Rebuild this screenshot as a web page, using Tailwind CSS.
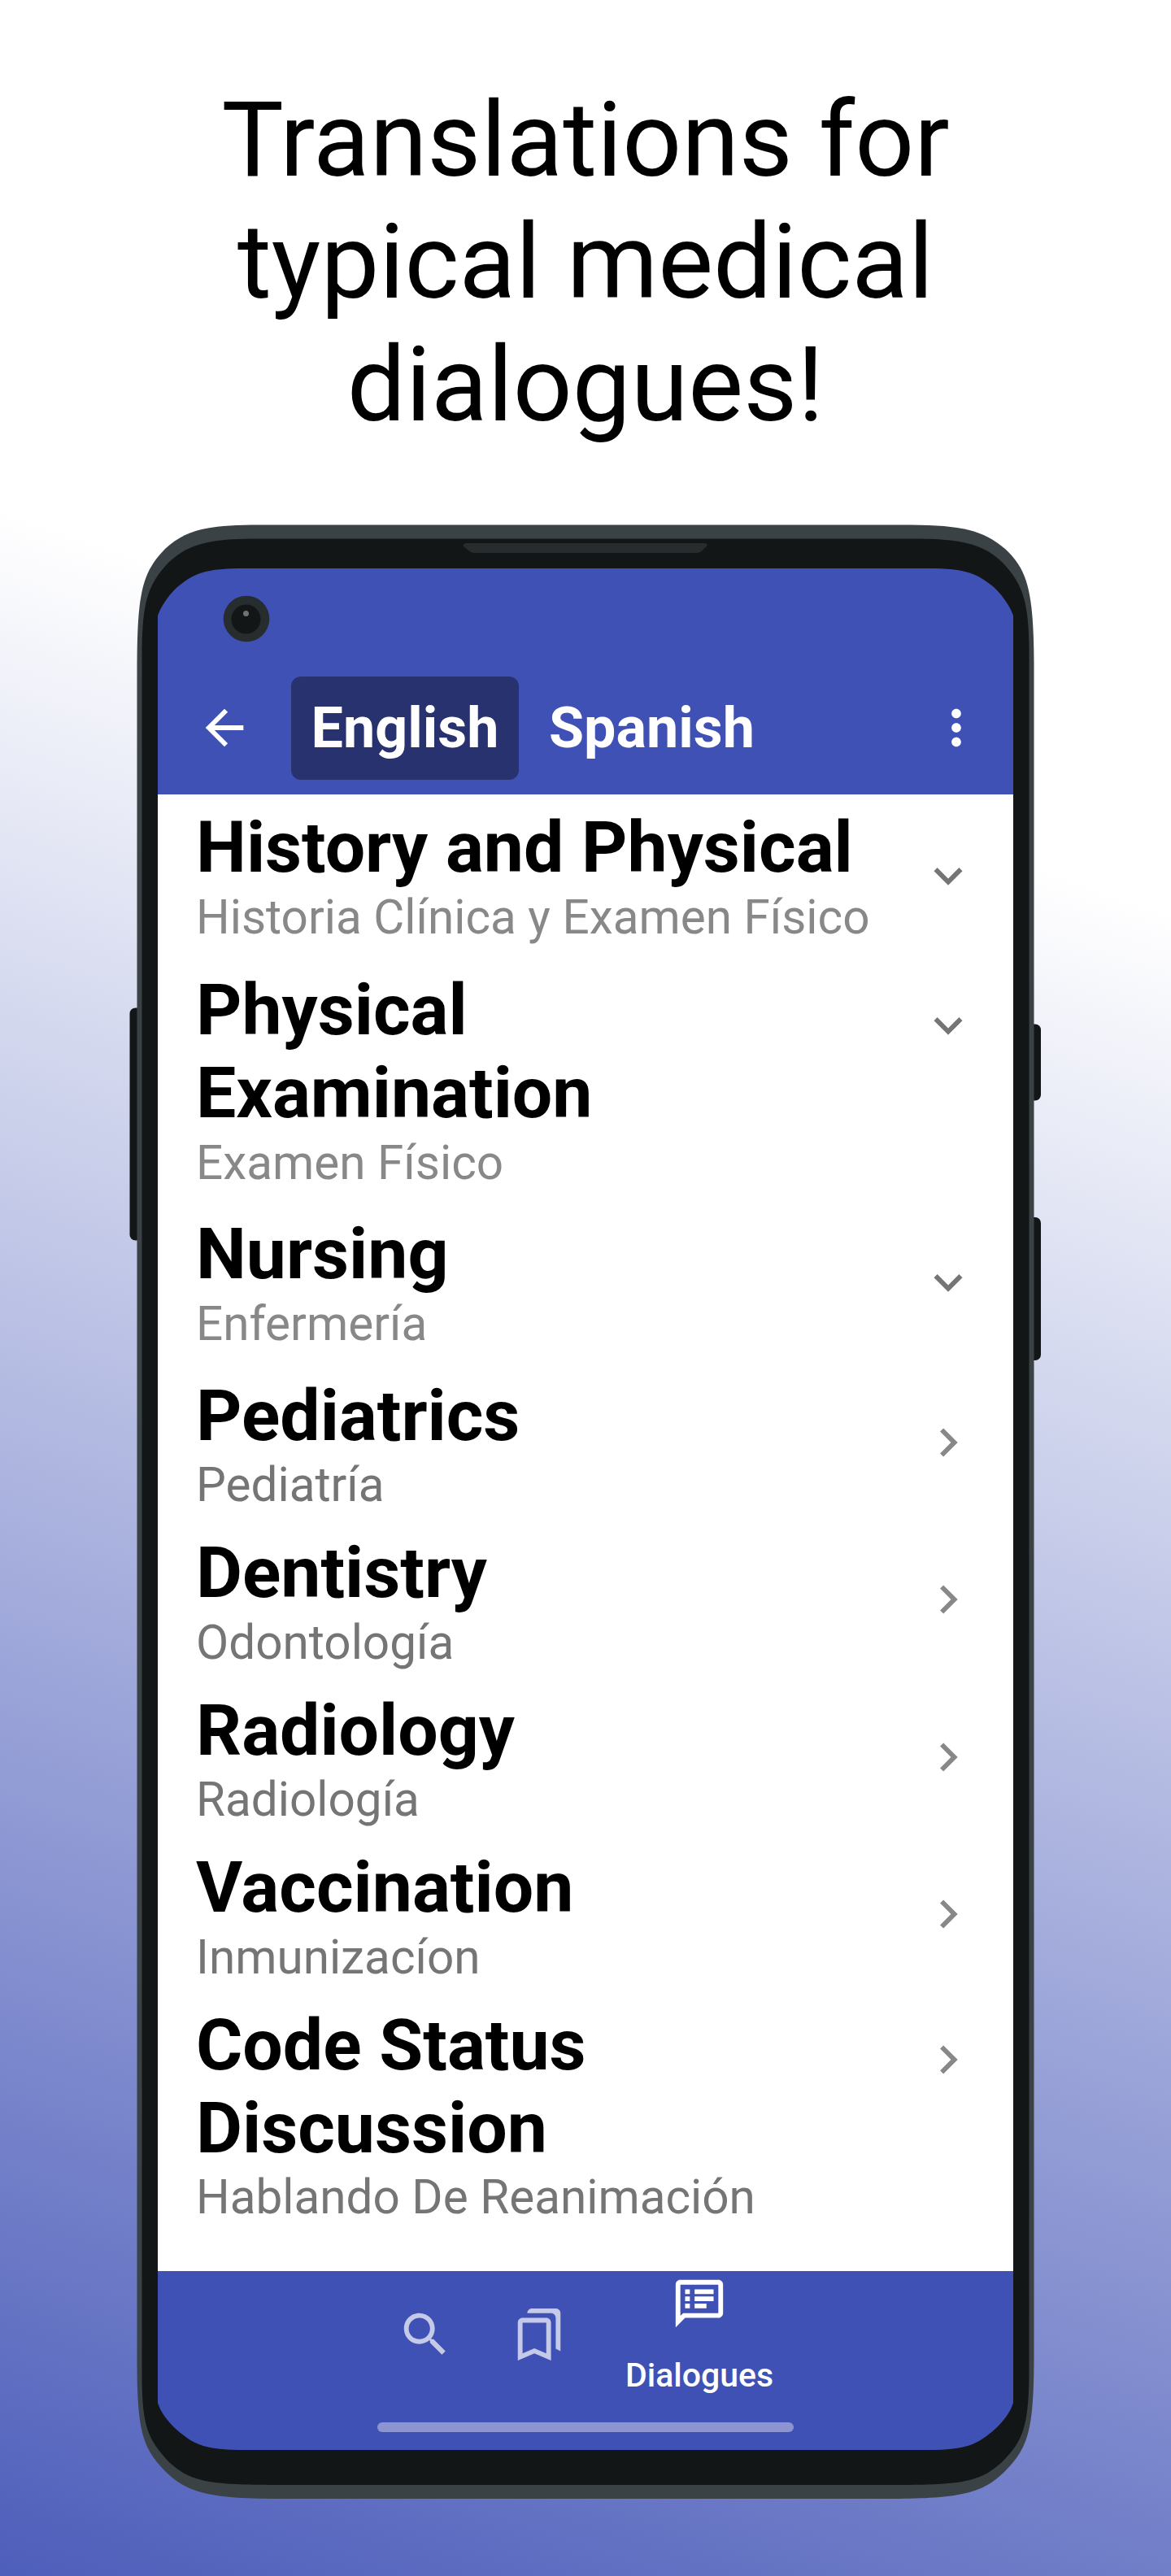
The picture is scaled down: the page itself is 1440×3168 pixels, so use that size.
<!DOCTYPE html>
<html lang="en"><head><meta charset="utf-8"><title>Medical dialogues</title>
<script src="https://cdn.jsdelivr.net/npm/@tailwindcss/browser@4"></script></head>
<body class="relative w-[1440px] h-[3168px] overflow-hidden font-[Roboto,sans-serif] bg-[linear-gradient(199deg,#ffffff_1060px,#3f51b5_3660px)]">
<svg class="absolute inset-0" width="1440" height="3168" viewBox="0 0 1440 3168" aria-hidden="true">
<g fill="#121616"><rect x="159.500" y="1239.500" width="20" height="286" rx="7"/><rect x="1255" y="1259.500" width="25" height="94" rx="7"/><rect x="1255" y="1497" width="25" height="176" rx="7"/></g>
<path fill="#3b4245" d="M319 645.500H1120C1182 646 1209 652 1236 675C1264 701 1271 728 1271.500 817V2902C1271 2990 1264 3010 1236 3039C1209 3066 1182 3073 1092 3073H347C257 3073 230 3066 203 3039C175 3010 168.500 2990 168.500 2902V817C169 728 175 704 203 675C230 650 257 646 319 645.500Z"/>
<path fill="#121616" d="M310 662.500H1130C1190 663 1211 672 1232 691C1258 718 1265 740 1265.500 800V2920C1265 2985 1257 3003 1232 3028C1205 3053 1180 3056 1100 3056H340C260 3056 235 3053 208 3028C182 3000 174.500 2985 174.500 2920V800C175 740 182 718 208 691C229 672 250 663 310 662.500Z"/>
<path fill="#272c2e" d="M573 668H867Q871 669 869 672Q866 674 864 677Q861 680 857 680H583Q579 680 576 677Q573 674 570 672Q569 669 573 668Z"/>
<path fill="#4051b5" d="M300 699H1140C1190 699 1202 706 1222 722C1236 735 1243 749 1246 757V2955C1242 2967 1236 2975 1224 2987C1202 3006 1190 3013 1140 3013H300C250 3013 238 3006 216 2987C204 2975 198 2967 194 2955V757C197 749 204 735 218 722C238 706 250 699 300 699Z"/>
<circle cx="303" cy="761" r="28.300" fill="#272c2e"/><circle cx="302.500" cy="761.500" r="18" fill="#121616"/><circle cx="302.500" cy="754.500" r="3.500" fill="#697577"/>
</svg>
<div class="relative flex flex-col items-center h-full">
<h1 class="h-[645px] pt-[97px] text-center text-[128px] leading-[150.3px] text-black">Translations for<br>typical medical<br>dialogues!</h1>
<main class="mt-[54px] w-[1052px] h-[2314px] flex flex-col">
<header class="h-[278px] pt-[133px] flex items-start text-[70px] font-bold text-white">
<svg class="ml-[47px] mt-[28px] shrink-0" width="70" height="70" viewBox="0 0 24 24" fill="currentColor"><path d="M20 11H7.830l5.590-5.590L12 4l-8 8 8 8 1.410-1.410L7.830 13H20v-2z"/></svg>
<div class="ml-[47px] w-[280px] h-[127px] rounded-[12px] bg-[#27326f] flex items-center justify-center">English</div>
<div class="ml-[37px] h-[127px] flex items-center">Spanish</div>
<svg class="ml-auto mr-[35px] mt-[28px]" width="70" height="70" viewBox="0 0 24 24" fill="currentColor"><path d="M12 8c1.100 0 2-.9 2-2s-.9-2-2-2-2 .9-2 2 .9 2 2 2zm0 2c-1.100 0-2 .9-2 2s.9 2 2 2 2-.9 2-2-.9-2-2-2zm0 6c-1.100 0-2 .9-2 2s.9 2 2 2 2-.9 2-2-.9-2-2-2z"/></svg>
</header>
<ul id="list" class="h-[1816px] bg-white pl-[47px] pr-[45.5px]"></ul>
<nav class="flex flex-col items-center h-[220px] text-white">
<div class="flex w-full h-[186px]">
<svg class="ml-[294px] mt-[43px] text-[#c5cae9]" width="70" height="70" viewBox="0 0 24 24" fill="currentColor"><path d="M15.500 14h-.79l-.28-.27C15.410 12.590 16 11.110 16 9.500 16 5.910 13.090 3 9.500 3S3 5.910 3 9.500 5.910 16 9.500 16c1.610 0 3.090-.59 4.230-1.570l.27.28v.79l5 4.990L20.490 19l-4.990-5zm-6 0C7.010 14 5 11.990 5 9.500S7.010 5 9.500 5 14 7.010 14 9.500 11.990 14 9.500 14z"/></svg>
<svg class="ml-[70px] mt-[43px] text-[#c5cae9]" width="70" height="70" viewBox="0 0 24 24" fill="currentColor"><path d="M15 7v12.970l-4.210-1.810-.79-.34-.79.34L5 19.970V7h10m4-6H8.990C7.890 1 7 1.900 7 3h10c1.100 0 2 .9 2 2v13l2 1V3c0-1.100-.9-2-2-2zm-4 4H5c-1.100 0-2 .9-2 2v16l7-3 7 3V7c0-1.100-.9-2-2-2z"/></svg>
<div class="ml-[68px] w-[188px] flex flex-col items-center">
<svg class="mt-[5px] shrink-0" width="70" height="70" viewBox="0 0 24 24" fill="currentColor"><path d="M4 4h16v12H5.170L4 17.170V4m0-2c-1.100 0-1.990.9-1.990 2L2 22l4-4h14c1.100 0 2-.9 2-2V4c0-1.100-.9-2-2-2H4zm2 10h2v2H6v-2zm0-3h2v2H6V9zm0-3h2v2H6V6zm4 6h5v2h-5v-2zm0-3h8v2h-8V9zm0-3h8v2h-8V6z"/></svg>
<span class="mt-[29px] text-[41px] leading-[48px] font-medium">Dialogues</span>
</div></div>
<div class="w-[512px] h-[12px] rounded-full bg-[#8c95d2]"></div>
</nav></main></div>
<script>
// title, translation, row height, expandable, chevron offset, subtitle colour
const rows=[["History and Physical","Historia Clínica y Examen Físico",200,1,65,"#888"],["Physical<br>Examination","Examen Físico",300,1,49,"#888"],["Nursing","Enfermería",198.5,1,65,"#888"],["Pediatrics","Pediatría",193.5,0,63,"#757575"],["Dentistry","Odontología",193.5,0,63,"#757575"],["Radiology","Radiología",193.5,0,63,"#757575"],["Vaccination","Inmunizacíon",193.5,0,63,"#757575"],["Code Status<br>Discussion","Hablando De Reanimación",296,0,48,"#757575"]];
const paths=["M10 6L8.590 7.410 13.170 12l-4.580 4.590L10 18l6-6z","M16.590 8.590L12 13.170 7.410 8.590 6 10l6 6 6-6z"];
document.getElementById("list").innerHTML=rows.map(r=>`<li class="flex justify-between" style="height:${r[2]}px"><div class="pt-[14px]"><div class="text-[87.660px] leading-[102px] font-bold text-black whitespace-nowrap">${r[0]}</div><div class="mt-[0.5px] text-[58.440px] leading-[68px] whitespace-nowrap" style="color:${r[5]}">${r[1]}</div></div><svg class="shrink-0" style="margin-top:${r[4]}px" width="70" height="70" viewBox="0 0 24 24" fill="${r[3]?"#757575":"#888"}"><path d="${paths[r[3]]}"/></svg></li>`).join("");
</script>
</body></html>
